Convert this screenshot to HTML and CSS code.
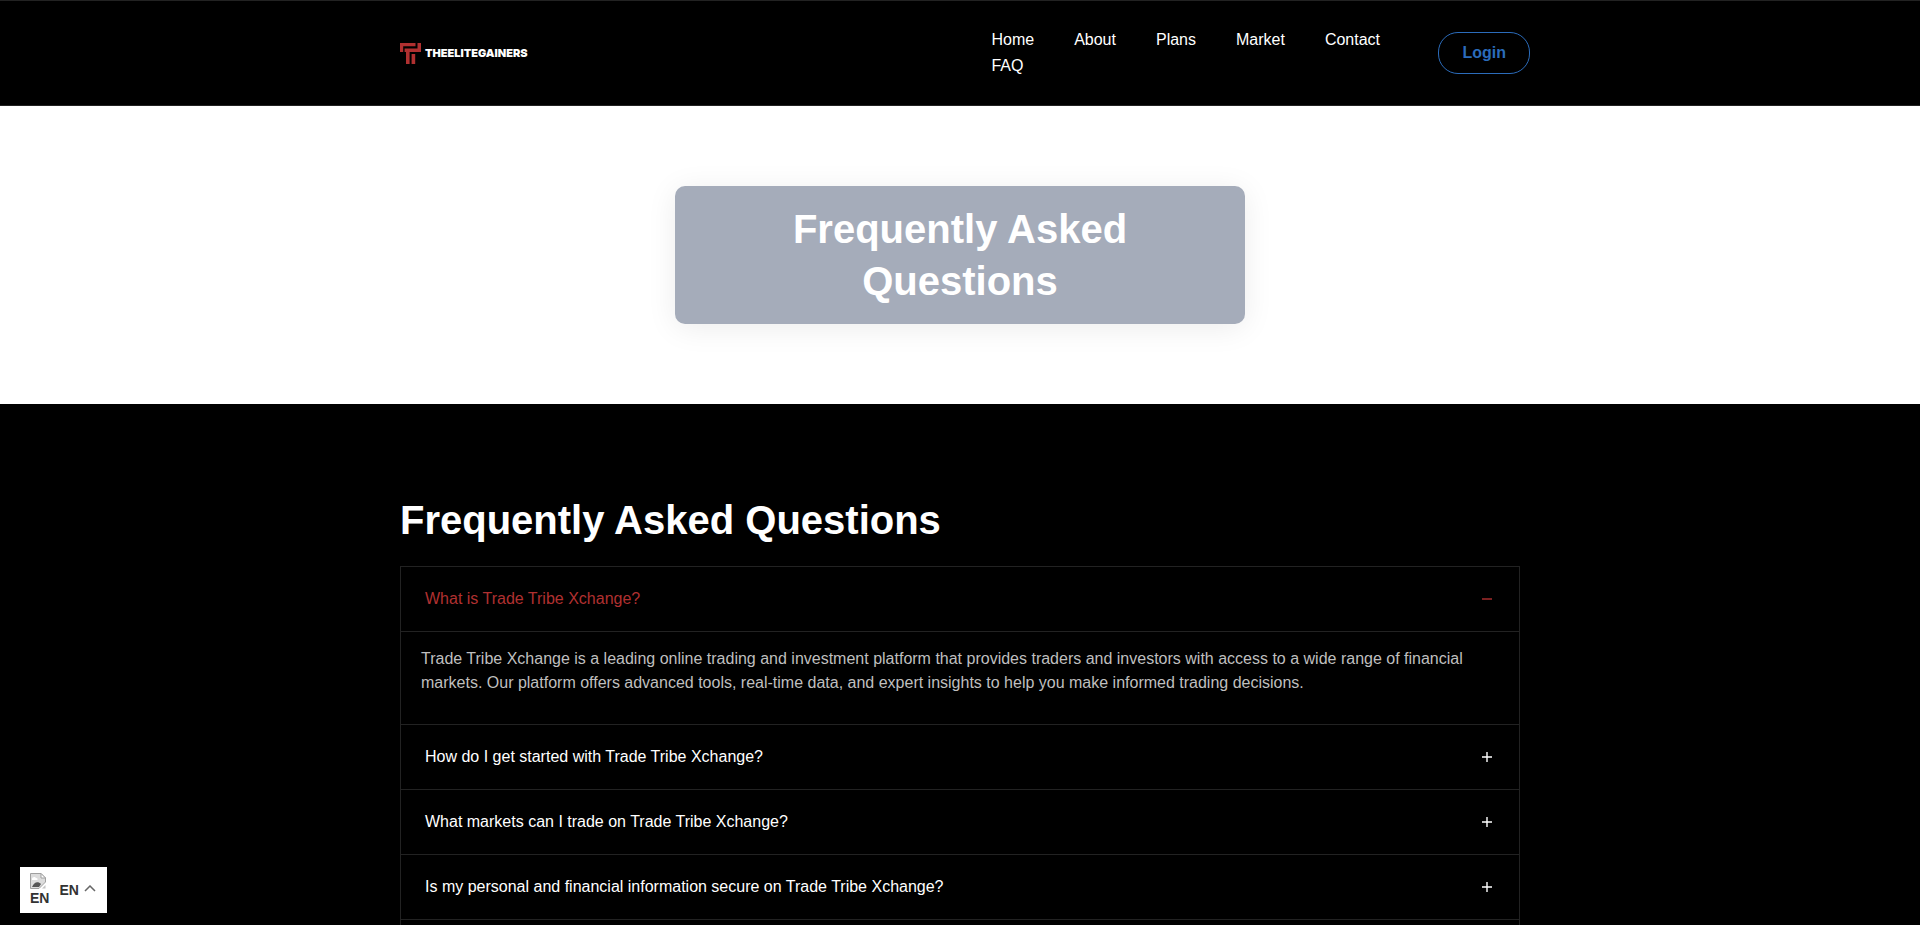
FILE: index.html
```html
<!DOCTYPE html>
<html lang="en">
<head>
    <meta charset="UTF-8">
    <meta name="viewport" content="width=device-width, initial-scale=1.0">
    <title>Frequently Asked Questions</title>
    <link rel="stylesheet" href="styles.css">
</head>
<body>

<header class="header">
    <div class="header-inner">
        <a class="logo" href="#">
            <svg width="21" height="21" viewBox="0 0 21 21" fill="#b03030" aria-hidden="true">
                <path d="M0 0H15.5V3.2H3.2V9H0Z"/>
                <path d="M17.5 0H21V9H9.6V21H6V9H4.6V5.6H17.5Z"/>
                <path d="M11.6 11H15.2V21H11.6Z"/>
            </svg>
            <span>THEELITEGAINERS</span>
        </a>
        <nav class="nav">
            <ul class="menu">
                <li><a href="#">Home</a></li>
                <li><a href="#">About</a></li>
                <li><a href="#">Plans</a></li>
                <li><a href="#">Market</a></li>
                <li><a href="#">Contact</a></li>
                <li><a href="#">FAQ</a></li>
            </ul>
            <a class="login" href="#">Login</a>
        </nav>
    </div>
</header>

<section class="hero">
    <div class="hero-card">
        <h1 class="title">Frequently Asked Questions</h1>
    </div>
</section>

<section class="faq">
    <h2 class="title">Frequently Asked Questions</h2>
    <div class="accordion">
        <div class="item">
            <button class="question open" aria-expanded="true" aria-controls="answer1">
                What is Trade Tribe Xchange?
                <svg width="10" height="10" viewBox="0 0 10 10" aria-hidden="true"><path d="M0 5H10"/></svg>
            </button>
            <p class="answer" id="answer1">Trade Tribe Xchange is a leading online trading and investment platform that provides traders and investors with access to a wide range of financial markets. Our platform offers advanced tools, real-time data, and expert insights to help you make informed trading decisions.</p>
        </div>
        <div class="item">
            <button class="question" aria-expanded="false">
                How do I get started with Trade Tribe Xchange?
                <svg width="10" height="10" viewBox="0 0 10 10" aria-hidden="true"><path d="M0 5H10M5 0V10"/></svg>
            </button>
        </div>
        <div class="item">
            <button class="question" aria-expanded="false">
                What markets can I trade on Trade Tribe Xchange?
                <svg width="10" height="10" viewBox="0 0 10 10" aria-hidden="true"><path d="M0 5H10M5 0V10"/></svg>
            </button>
        </div>
        <div class="item">
            <button class="question" aria-expanded="false">
                Is my personal and financial information secure on Trade Tribe Xchange?
                <svg width="10" height="10" viewBox="0 0 10 10" aria-hidden="true"><path d="M0 5H10M5 0V10"/></svg>
            </button>
        </div>
    </div>
</section>

<button class="language">
    <span class="flag">
        <svg width="16" height="16" viewBox="0 0 16 16" aria-hidden="true">
            <path d="M0.5 0.5H11L15.5 5V9L9 15.5H0.5Z" fill="#dcdcdc" stroke="#a0a0a0"/>
            <path d="M2 6C2 4 5 3 6 5C8 5 8 7 7 7H2Z" fill="#fff"/>
            <path d="M2 14C4 9 8 8 11 11L9 14Z" fill="#555"/>
            <path d="M11 0.5V5H15.5Z" fill="#fff" stroke="#a0a0a0"/>
            <path d="M15.5 12V15.5H12Z" fill="#c4c4c4"/>
        </svg>
        <span>EN</span>
    </span>
    <span>EN</span>
    <svg class="arrow" width="12" height="10" viewBox="0 0 12 10" aria-hidden="true"><path d="M1 6L6 1L11 6"/></svg>
</button>

</body>
</html>
```
FILE: styles.css
```css
* {
    box-sizing: border-box;
}

body {
    margin: 0;
    min-height: 100vh;
    display: flex;
    flex-direction: column;
    background-color: #000;
    color: #fff;
    font-family: "Liberation Sans", Arial, sans-serif;
    font-size: 16px;
}

a {
    color: inherit;
    text-decoration: none;
}

.header {
    border-top: 1px solid #222;
    border-bottom: 1px solid #222;
}

.header-inner {
    display: flex;
    align-items: center;
    justify-content: space-between;
    max-width: 1140px;
    margin: 0 auto;
    padding: 26px 0 26px 10px;
}

.logo {
    display: flex;
    align-items: center;
    gap: 4px;
    font-family: Inter, sans-serif;
    font-size: 11px;
    font-weight: 900;
}

.nav {
    display: flex;
    align-items: center;
}

.menu {
    display: flex;
    flex-wrap: wrap;
    column-gap: 40px;
    width: 447px;
    margin: 0;
    padding: 0 16px 0 0;
    list-style: none;
    line-height: 26px;
}

.login {
    padding: 0 23px;
    border: 1px solid #2b6cbb;
    border-radius: 20px;
    color: #2b6cbb;
    font-weight: bold;
    line-height: 40px;
}

.hero {
    padding: 80px 20px;
    background-color: #fff;
}

.hero-card {
    max-width: 570px;
    margin: 0 auto;
    padding: 17px 60px;
    border-radius: 10px;
    background-color: #a5acba;
    box-shadow: 0 4px 30px rgba(0, 0, 0, 0.08);
    text-align: center;
}

.title {
    margin: 0;
    font-size: 40px;
    font-weight: bold;
    line-height: 52px;
}

.faq {
    flex: 1;
    display: flex;
    flex-direction: column;
    width: 100%;
    max-width: 1120px;
    margin: 0 auto;
    padding-top: 90px;
}

.accordion {
    flex: 1;
    margin-top: 20px;
    border: 1px solid #222;
    border-bottom: none;
}

.item {
    border-bottom: 1px solid #222;
}

.question {
    display: flex;
    align-items: center;
    justify-content: space-between;
    width: 100%;
    padding: 20px 27px 20px 24px;
    border: none;
    background: none;
    color: #fff;
    font: inherit;
    line-height: 24px;
    text-align: left;
    cursor: pointer;
}

.question svg {
    fill: none;
    stroke: currentColor;
    stroke-width: 1.4;
}

.question.open {
    border-bottom: 1px solid #222;
    color: #b03030;
}

.answer {
    margin: 0;
    padding: 15px 20px 29px;
    color: #bfbfbf;
    line-height: 24px;
}

/* language switcher stays over the page */
.language {
    position: fixed;
    left: 20px;
    bottom: 12px;
    display: flex;
    align-items: center;
    height: 46px;
    padding: 0 11px 0 10px;
    border: none;
    background-color: #fff;
    color: #333;
    font-family: inherit;
    font-size: 14px;
    font-weight: bold;
    line-height: 18px;
    cursor: pointer;
}

.flag {
    display: flex;
    flex-direction: column;
    margin-right: 10px;
}

.arrow {
    margin-left: 5px;
    fill: none;
    stroke: #666;
    stroke-width: 1.5;
}
```
